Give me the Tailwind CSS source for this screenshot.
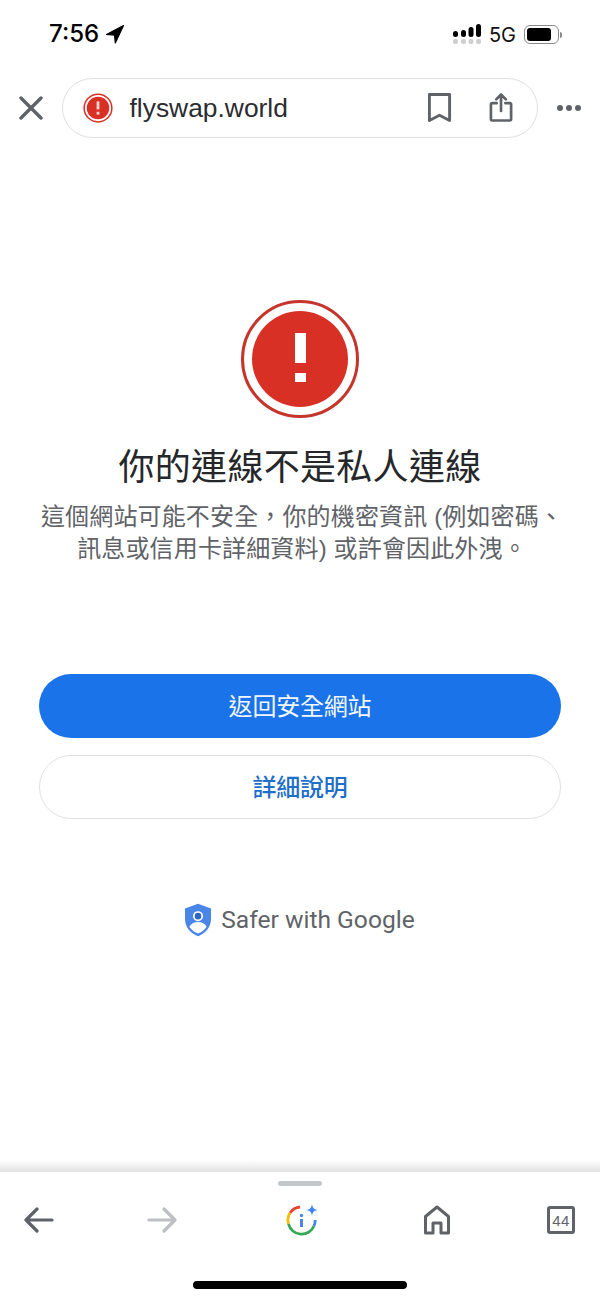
<!DOCTYPE html>
<html lang="zh-Hant">
<head>
<meta charset="utf-8">
<title>flyswap.world</title>
<script src="https://cdn.jsdelivr.net/npm/@tailwindcss/browser@4"></script>
</head>
<body class="bg-white">
<div class="w-[600px] h-[1299px] flex flex-col overflow-hidden font-['Liberation_Sans','Noto_Sans_CJK_TC',sans-serif]">

  <!-- Status bar -->
  <div class="h-[78px] shrink-0 flex justify-between pt-[20px] pl-[49px] pr-[38px]">
    <div class="flex items-start text-black">
      <span class="text-[24px] leading-[28px] font-medium font-['Inter','Noto_Sans_CJK_TC',sans-serif]">7:56</span>
      <svg class="w-[20px] h-[20px] ml-[6px] mt-[4px]" viewBox="0 0 20 20"><path d="M18.500 1.500 1.500 10.500l8 .6.8 7.900z" fill="#000" stroke="#000" stroke-width="1.200" stroke-linejoin="round"/></svg>
    </div>
    <div class="flex items-start">
      <svg class="w-[30px] h-[26px] mt-[3px]" viewBox="0 0 30 26">
        <g fill="#000">
          <rect x="1" y="8" width="5" height="6" rx="2.5"/>
          <rect x="9" y="7" width="5" height="7" rx="2.5"/>
          <rect x="16.500" y="4" width="5" height="10" rx="2.5"/>
          <rect x="24" y="1" width="5" height="13" rx="2.5"/>
        </g>
        <g fill="#cfcfcf">
          <rect x="1" y="16" width="5" height="5" rx="2"/>
          <rect x="9" y="16" width="5" height="5" rx="2"/>
          <rect x="16.500" y="16" width="5" height="5" rx="2"/>
          <rect x="24" y="16" width="5" height="5" rx="2"/>
        </g>
      </svg>
      <span class="ml-[7px] mt-[3px] text-[20px] leading-[24px] text-[#111] font-['Inter',sans-serif]">5G</span>
      <div class="ml-[8px] mt-[5px] flex items-center">
        <div class="w-[35px] h-[19px] rounded-[6px] border border-[#8a8a8a] p-[2px]">
          <div class="w-[24px] h-full rounded-[3px] bg-black"></div>
        </div>
        <div class="w-[2px] h-[6px] ml-[1px] rounded-r-full bg-[#8a8a8a]"></div>
      </div>
    </div>
  </div>

  <!-- Address bar -->
  <div class="h-[60px] shrink-0 flex items-center">
    <button class="w-[62px] h-[60px] flex items-center justify-center">
      <svg class="w-[24px] h-[24px]" viewBox="0 0 24 24" fill="none" stroke="#5f6368" stroke-width="3.400" stroke-linecap="round"><path d="M2 2l20 20M22 2 2 22"/></svg>
    </button>
    <div class="w-[476px] h-[60px] rounded-full border-[1.5px] border-[#e1e1e3] flex items-center pl-[19.5px] pr-[23px]">
      <svg class="w-[30px] h-[30px] shrink-0" viewBox="0 0 32 32">
        <circle cx="16" cy="16" r="14.800" fill="none" stroke="#d93025" stroke-width="1.600"/>
        <circle cx="16" cy="16" r="12" fill="#d93025"/>
        <rect x="14.500" y="9" width="3" height="8.500" fill="#f6d5d2"/>
        <rect x="14.500" y="20" width="3" height="3" fill="#f6d5d2"/>
      </svg>
      <span class="ml-[17px] text-[26.4px] leading-[32px] text-[#2b2c2f]">flyswap.world</span>
      <svg class="ml-auto w-[25px] h-[32px]" viewBox="0 0 26 32" fill="none" stroke="#5f6368" stroke-width="3" stroke-linejoin="round"><path d="M2.500 2h21v27l-10.500-5.500L2.500 29z"/></svg>
      <svg class="ml-[37px] w-[25px] h-[32px]" viewBox="0 0 26 32" fill="none" stroke="#5f6368" stroke-width="2.800" stroke-linecap="round" stroke-linejoin="round"><path d="M8 11H3.500a1.500 1.500 0 0 0-1.500 1.500v15A1.500 1.500 0 0 0 3.500 29h18a1.500 1.500 0 0 0 1.500-1.500v-15a1.500 1.500 0 0 0-1.500-1.500H17M12.500 19V2M7.500 7l5-5 5 5"/></svg>
    </div>
    <div class="flex ml-[19px] gap-[3px]">
      <span class="w-[6px] h-[6px] rounded-full bg-[#5f6368]"></span>
      <span class="w-[6px] h-[6px] rounded-full bg-[#5f6368]"></span>
      <span class="w-[6px] h-[6px] rounded-full bg-[#5f6368]"></span>
    </div>
  </div>

  <!-- Interstitial -->
  <main class="flex-1 flex flex-col items-center pt-[161px] px-[39px]">
    <svg class="w-[120px] h-[120px]" viewBox="0 0 120 120">
      <circle cx="60" cy="60" r="57.500" fill="none" stroke="#c5352b" stroke-width="3"/>
      <circle cx="60" cy="60" r="48" fill="#d93025"/>
      <rect x="55" y="34" width="11" height="30" fill="#fff"/>
      <rect x="55" y="74" width="11" height="9" fill="#fff"/>
    </svg>
    <h1 class="mt-[25px] text-[36px] leading-[48px] tracking-[0.3px] font-normal text-[#26272a] whitespace-nowrap">你的連線不是私人連線</h1>
    <p class="mt-[9px] w-[540px] -mx-[9px] pl-[4px] text-center text-[24px] leading-[32px] tracking-[0.15px] text-[#5f6368]">這個網站可能不安全，你的機密資訊 (例如密碼、<br>訊息或信用卡詳細資料) 或許會因此外洩。</p>
    <button class="mt-[109px] w-[522px] h-[64px] shrink-0 rounded-full bg-[#1a73e8] text-[#f2f7fe] text-[24px] tracking-[-0.2px] pt-[1px]">返回安全網站</button>
    <button class="mt-[17px] w-[522px] h-[64px] shrink-0 rounded-full border-[1.5px] border-[#e1e1e3] text-[#1f6fc8] text-[24px] tracking-[-0.2px] font-medium pt-[1px]">詳細說明</button>
    <div class="mt-[84px] flex items-center">
      <svg class="w-[26px] h-[34px]" viewBox="0 0 27 34">
        <path d="M13.500 0 0 5v11c0 8.500 5.800 15 13.500 18C21.200 31 27 24.500 27 16V5z" fill="#4a86e8"/>
        <circle cx="13.500" cy="13" r="5.200" fill="#fff"/>
        <circle cx="13.500" cy="13" r="3.400" fill="#2f66c4"/>
        <path d="M4.500 24c1.500-3.500 5-5 9-5s7.500 1.500 9 5c-2 3-5 5.500-9 7-4-1.500-7-4-9-7z" fill="#fff"/>
      </svg>
      <span class="ml-[10px] text-[24.6px] leading-[34px] text-[#5f6368] font-['Roboto',sans-serif]">Safer with Google</span>
    </div>
  </main>

  <!-- Bottom toolbar -->
  <div class="h-[12px] shrink-0 bg-gradient-to-b from-white to-[#e2e2e2]"></div>
  <nav class="h-[127px] shrink-0 flex flex-col items-center">
    <div class="mt-[9px] w-[44px] h-[5px] rounded-full bg-[#c4c7c9]"></div>
    <div class="w-full mt-[17px] flex items-center pl-[24px]">
      <svg class="w-[30px] h-[30px]" viewBox="0 0 30 30" fill="none" stroke="#5f6368" stroke-width="3.200" stroke-linecap="round" stroke-linejoin="round"><path d="M28 15H2M13 4 2 15l11 11"/></svg>
      <svg class="ml-[93px] w-[30px] h-[30px]" viewBox="0 0 30 30" fill="none" stroke="#bdbfc2" stroke-width="3.200" stroke-linecap="round" stroke-linejoin="round"><path d="M2 15h26M17 4l11 11-11 11"/></svg>
      <svg class="ml-[108px] w-[34px] h-[34px]" viewBox="0 0 34 34" fill="none">
        <path d="M15 4A13.500 13.500 0 0 0 5 10" stroke="#ea4335" stroke-width="2.800"/>
        <path d="M5 10a13.500 13.500 0 0 0-1.500 11" stroke="#fbbc04" stroke-width="2.800"/>
        <path d="M3.500 21a13.500 13.500 0 0 0 25.500 2" stroke="#34a853" stroke-width="2.800"/>
        <path d="M29 23c.8-1.900 1.200-3.800 1.200-6" stroke="#4285f4" stroke-width="2.800"/>
        <path d="M27 1c.6 4 2 5.500 6 6-4 .6-5.400 2-6 6-.6-4-2-5.400-6-6 4-.5 5.400-2 6-6z" fill="#4285f4"/>
        <circle cx="16.500" cy="12.500" r="1.700" fill="#4a86e8"/>
        <rect x="15" y="16" width="3" height="8" fill="#4a86e8"/>
      </svg>
      <svg class="ml-[104px] w-[28px] h-[30px]" viewBox="0 0 28 30" fill="none" stroke="#5f6368" stroke-width="3" stroke-linejoin="round"><path d="M2.500 28V11.500L14 2l11.500 9.500V28h-7.500v-10h-8v10z"/></svg>
      <div class="ml-[96px] w-[28px] h-[28px] rounded-[3px] border-[3px] border-[#5f6368] flex items-center justify-center text-[15px] leading-none text-[#5f6368] tracking-[0.5px]">44</div>
    </div>
    <div class="mt-[44px] w-[214px] h-[8px] rounded-full bg-black"></div>
  </nav>
</div>
</body>
</html>
